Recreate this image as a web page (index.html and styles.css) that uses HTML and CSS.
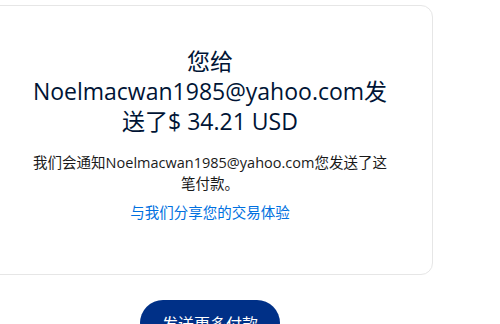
FILE: index.html
```html
<!DOCTYPE html>
<html lang="zh-CN">
<head>
    <meta charset="UTF-8">
    <meta name="viewport" content="width=device-width, initial-scale=1.0">
    <title>付款已发送</title>
    <link rel="stylesheet" href="styles.css">
</head>
<body>
    <div class="page">
        <div class="card">
            <h1 class="title">您给 Noelmacwan1985@yahoo.com发送了$ 34.21 USD</h1>
            <p class="notice">我们会通知Noelmacwan1985@yahoo.com您发送了这笔付款。</p>
            <a href="#" class="share">与我们分享您的交易体验</a>
        </div>
        <div class="actions">
            <button class="more">发送更多付款</button>
        </div>
    </div>
</body>
</html>
```

FILE: styles.css
```css
body, * { margin: 0; padding: 0; box-sizing: border-box; }
body {
    font-family: "Open Sans", "Noto Sans CJK SC", sans-serif;
    color: #001435;
    background: #fff;
    overflow: hidden;
}
.page {
    width: 446px;
    margin-left: -13px;
    padding-top: 5px;
}
.card {
    border: 1px solid #e6e6e6;
    border-radius: 12px;
    padding: 40px 40px 51px;
    text-align: center;
}
.title {
    font-size: 23px;
    font-weight: 400;
    line-height: 30px;
}
.notice {
    margin-top: 16px;
    font-size: 14.5px;
    line-height: 21px;
    color: #1a1a1a;
}
.share {
    display: inline-block;
    margin-top: 8px;
    font-size: 14.5px;
    line-height: 21px;
    color: #0070e0;
    text-decoration: none;
}
.actions {
    display: flex;
    justify-content: center;
    margin-top: 25px;
}
.more {
    width: 140px;
    height: 46px;
    border: none;
    border-radius: 23px;
    background: #003087;
    color: #fff;
    font-family: "Open Sans", "Noto Sans CJK SC", sans-serif;
    font-size: 16px;
}
```
